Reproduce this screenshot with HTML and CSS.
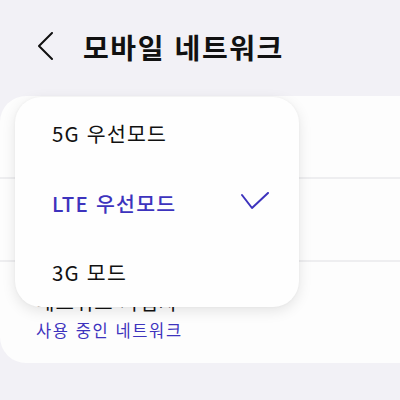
FILE: index.html
```html
<!DOCTYPE html>
<html lang="ko">
<head>
<meta charset="utf-8">
<link rel="stylesheet" href="styles.css">
</head>
<body>
<div class="screen">
  <header class="appbar">
    <svg class="back" width="16" height="30" viewBox="0 0 16 30"><polyline points="14,1 1,14 14,27" fill="none" stroke="#111" stroke-width="2" stroke-linecap="round" stroke-linejoin="round"/></svg>
    <h1 class="title">모바일 네트워크</h1>
  </header>
  <section class="card">
    <div class="row row-a"></div>
    <div class="row row-b"></div>
    <div class="row row-c">
      <span class="row-title">네트워크 사업자</span>
      <span class="row-sub">사용 중인 네트워크</span>
    </div>
  </section>
  <div class="popup">
    <div class="item">5G 우선모드</div>
    <div class="item selected">LTE 우선모드
      <svg class="check" width="28" height="18" viewBox="0 0 28 18"><polyline points="1,3 11,16 27,1" fill="none" stroke="#3d33bd" stroke-width="2" stroke-linecap="round" stroke-linejoin="round"/></svg>
    </div>
    <div class="item">3G 모드</div>
  </div>
</div>
</body>
</html>
```
FILE: styles.css
```css
html, body {
  margin: 0;
  padding: 0;
  background: #f2f1f6;
  overflow: hidden;
  font-family: "Noto Sans CJK KR", "Noto Sans", sans-serif;
}
.screen {
  position: relative;
  width: 400px;
  height: 400px;
  overflow: hidden;
}
.appbar {
  display: flex;
  align-items: center;
  height: 96px;
  padding-left: 38px;
  box-sizing: border-box;
  padding-bottom: 2px;
}
.back {
  display: block;
  margin-right: 29px;
}
.title {
  margin: 0;
  font-size: 28px;
  font-weight: 700;
  color: #111;
  letter-spacing: 1.6px;
}
.card {
  background: #fdfdfd;
  width: 430px;
  border-radius: 26px;
  overflow: hidden;
}
.row {
  display: flex;
  flex-direction: column;
  justify-content: center;
  padding-left: 36px;
  box-sizing: border-box;
  border-bottom: 2px solid #eeeef0;
}
.row-a { height: 83px; }
.row-b { height: 83px; }
.row-c {
  height: 101px;
  border-bottom: none;
  justify-content: flex-start;
  padding-top: 24px;
}
.row-title {
  font-size: 20px;
  color: #111;
  line-height: 32px;
  letter-spacing: 1px;
}
.row-sub {
  font-size: 16.5px;
  color: #3d33bd;
  line-height: 24px;
  letter-spacing: 1.6px;
}
.popup {
  position: absolute;
  left: 15px;
  top: 97px;
  width: 284px;
  height: 210px;
  background: #fefefe;
  border-radius: 26px;
  box-shadow: 0 4px 14px rgba(0, 0, 0, 0.10), 0 0 3px rgba(0, 0, 0, 0.04);
  display: flex;
  flex-direction: column;
  padding-top: 1px;
  box-sizing: border-box;
}
.item {
  display: flex;
  align-items: center;
  justify-content: space-between;
  height: 70px;
  padding-left: 37px;
  padding-right: 30px;
  font-size: 20.5px;
  letter-spacing: 1.2px;
  color: #111;
}
.item.selected {
  color: #3d33bd;
  font-weight: 500;
}
.check {
  display: block;
  margin-top: -4px;
}
```
